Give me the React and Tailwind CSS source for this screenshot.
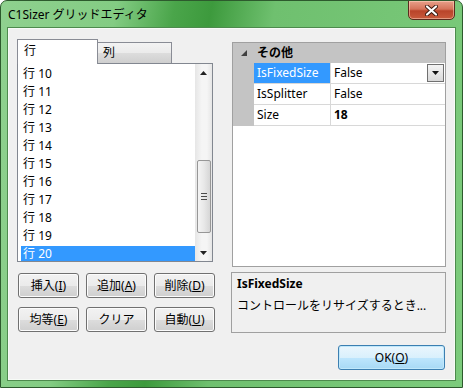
import React from "react";

const btnCls =
  "h-[25px] w-[61px] rounded-[3px] border border-[#707070] bg-[linear-gradient(#f2f2f2_0%,#ebebeb_50%,#dddddd_50%,#cfcfcf_100%)] shadow-[inset_0_0_0_1px_#fcfcfc] text-[12px] leading-none text-black flex items-center justify-center";

function Btn({ label, acc }) {
  return (
    <div className={btnCls}>
      <span>
        {label}
        {acc ? (
          <>
            (<u>{acc}</u>)
          </>
        ) : null}
      </span>
    </div>
  );
}

export default function App() {
  const rows = [10, 11, 12, 13, 14, 15, 16, 17, 18, 19, 20];
  return (
    <div
      className="w-[463px] h-[388px] flex flex-col overflow-hidden rounded-t-[7px] border border-[#2d5a2d] bg-[linear-gradient(100deg,#8fd18f_0%,#83cc83_22%,#4aa54a_33%,#3d9a3d_40%,#6fc06f_52%,#7ccb7c_100%)] text-black"
      style={{ fontFamily: '"Noto Sans", "Noto Sans CJK JP", sans-serif' }}
    >
      {/* Title bar */}
      <div className="relative h-[27px] flex items-center pl-[7px] shrink-0">
        <span className="text-[12px] leading-none text-black">C1Sizer グリッドエディタ</span>
        <div className="absolute right-[7px] top-[-1px] w-[47px] h-[20px] rounded-b-[5px] border border-[#5a2a1e] bg-[linear-gradient(#e8a08a_0%,#d5735a_45%,#b9442a_55%,#c85a3c_100%)] flex items-center justify-center shadow-[inset_0_0_0_1px_rgba(255,220,200,0.5)]">
          <svg width="13" height="11" viewBox="0 0 13 11">
            <path d="M2 1.5 L11 9.5 M11 1.5 L2 9.5" stroke="#3a1a10" strokeWidth="4" strokeLinecap="round" />
            <path d="M2 1.5 L11 9.5 M11 1.5 L2 9.5" stroke="#ffffff" strokeWidth="2.2" strokeLinecap="round" />
          </svg>
        </div>
      </div>

      {/* Client */}
      <div className="mx-[7px] mb-[7px] flex-1 bg-[#f0f0f0] border border-[#f7fbf7] shadow-[0_0_0_1px_#4d8a4d] flex pl-[8px] pt-[10px] pr-[8px]">
        {/* Left column */}
        <div className="w-[199px] flex flex-col">
          {/* Tabs */}
          <div className="flex items-end h-[25px]">
            <div className="relative z-10 w-[81px] h-[25px] bg-white border border-b-0 border-[#898c95] pl-[6px] pt-[3px] text-[12px] leading-[16px]">
              行
            </div>
            <div className="w-[74px] h-[21px] mb-px border border-l-0 border-b-0 border-[#898c95] bg-[linear-gradient(#f3f3f3_0%,#ebebeb_50%,#dddddd_50%,#cfcfcf_100%)] pl-[5px] pt-[2px] text-[12px] leading-[16px]">
              列
            </div>
          </div>
          {/* List */}
          <div className="-mt-px w-[196px] h-[199px] border border-[#828790] bg-white flex overflow-hidden">
            <div className="w-[177px] pt-px flex flex-col">
              {rows.map((r) => (
                <div key={r} className="h-[18px] shrink-0 flex items-center">
                  {r === 20 ? (
                    <div className="ml-[3px] w-[174px] h-[16px] bg-[#3399ff] text-white pl-[2px] text-[12px] leading-[16px]">
                      行 {r}
                    </div>
                  ) : (
                    <div className="pl-[5px] text-[12px] leading-[16px]">行 {r}</div>
                  )}
                </div>
              ))}
            </div>
            {/* Scrollbar */}
            <div className="w-[17px] flex flex-col bg-[linear-gradient(90deg,#e6e6e6,#f5f5f5_40%,#f5f5f5_70%,#e6e6e6)]">
              <div className="h-[17px] flex items-center justify-center">
                <svg width="7" height="4" viewBox="0 0 7 4">
                  <path d="M0 4 L3.5 0 L7 4 Z" fill="#222" />
                </svg>
              </div>
              <div className="flex-1 relative">
                <div className="absolute left-[2px] top-[79px] w-[14px] h-[73px] rounded-[2px] border border-[#979797] bg-[linear-gradient(90deg,#f4f4f4,#e8e8e8_50%,#d6d6d6)] flex items-center justify-center">
                  <div className="flex flex-col gap-[2px]">
                    <div className="w-[6px] h-px bg-[#4a4a4a]" />
                    <div className="w-[6px] h-px bg-[#4a4a4a]" />
                    <div className="w-[6px] h-px bg-[#4a4a4a]" />
                  </div>
                </div>
              </div>
              <div className="h-[17px] flex items-center justify-center">
                <svg width="7" height="4" viewBox="0 0 7 4">
                  <path d="M0 0 L7 0 L3.5 4 Z" fill="#222" />
                </svg>
              </div>
            </div>
          </div>
          {/* Buttons */}
          <div className="mt-[11px] pl-px grid grid-cols-[61px_61px_61px] gap-x-[7px] gap-y-[9px]">
            <Btn label="挿入" acc="I" />
            <Btn label="追加" acc="A" />
            <Btn label="削除" acc="D" />
            <Btn label="均等" acc="E" />
            <Btn label="クリア" />
            <Btn label="自動" acc="U" />
          </div>
        </div>

        {/* Right column */}
        <div className="ml-[15px] w-[215px] flex flex-col pt-[3px]">
          {/* Property grid */}
          <div className="ml-px h-[225px] border border-[#a0a0a0] bg-white flex flex-col">
            <div className="h-[20px] bg-[#c4c4c4] flex items-center">
              <div className="w-[21px] flex justify-center">
                <svg width="6" height="6" viewBox="0 0 6 6">
                  <path d="M6 0 L6 6 L0 6 Z" fill="#404040" />
                </svg>
              </div>
              <span className="pl-[3px] text-[12px] leading-[16px] font-bold">その他</span>
            </div>
            <div className="flex">
              <div className="w-[21px] bg-[#c4c4c4]" />
              <div className="flex-1 flex flex-col">
                {[
                  ["IsFixedSize", "False", true],
                  ["IsSplitter", "False", false],
                  ["Size", "18", false],
                ].map(([n, v, sel]) => (
                  <div key={n} className="h-[21px] flex border-b border-[#d8d8d8]">
                    <div
                      className={
                        "w-[77px] border-r border-[#d8d8d8] pl-[3px] flex items-center text-[12px] leading-[16px] " +
                        (sel ? "bg-[#3399ff] text-white" : "")
                      }
                    >
                      {n}
                    </div>
                    <div className="flex-1 flex items-center pl-[3px] relative">
                      <span
                        className={
                          "text-[12px] leading-[16px] " + (n === "Size" ? "font-bold" : "")
                        }
                      >
                        {v}
                      </span>
                      {sel ? (
                        <div className="absolute right-[1px] top-[1px] w-[17px] h-[18px] border border-[#707070] bg-[linear-gradient(#f4f4f4,#d8d8d8)] flex items-center justify-center">
                          <svg width="7" height="4" viewBox="0 0 7 4">
                            <path d="M0 0 L7 0 L3.5 4 Z" fill="#111" />
                          </svg>
                        </div>
                      ) : null}
                    </div>
                  </div>
                ))}
              </div>
            </div>
          </div>
          {/* Description */}
          <div className="mt-[5px] h-[61px] border border-[#a0a0a0] bg-[#f0f0f0] pl-[5px] pt-[3px]">
            <div className="text-[12px] leading-[16px] font-bold">IsFixedSize</div>
            <div className="mt-[6px] text-[12px] leading-[16px]">コントロールをリサイズするとき...</div>
          </div>
          {/* OK */}
          <div className="mt-[12px] flex justify-end pr-px">
            <div className="w-[107px] h-[25px] rounded-[3px] border border-[#3c7fb1] bg-[linear-gradient(#eaf6fd_0%,#d9f0fc_50%,#bee6fd_50%,#a7d9f5_100%)] shadow-[inset_0_0_0_1px_#c0e8fb] flex items-center justify-center text-[12px] leading-none">
              <span>
                OK(<u>O</u>)
              </span>
            </div>
          </div>
        </div>
      </div>
    </div>
  );
}
